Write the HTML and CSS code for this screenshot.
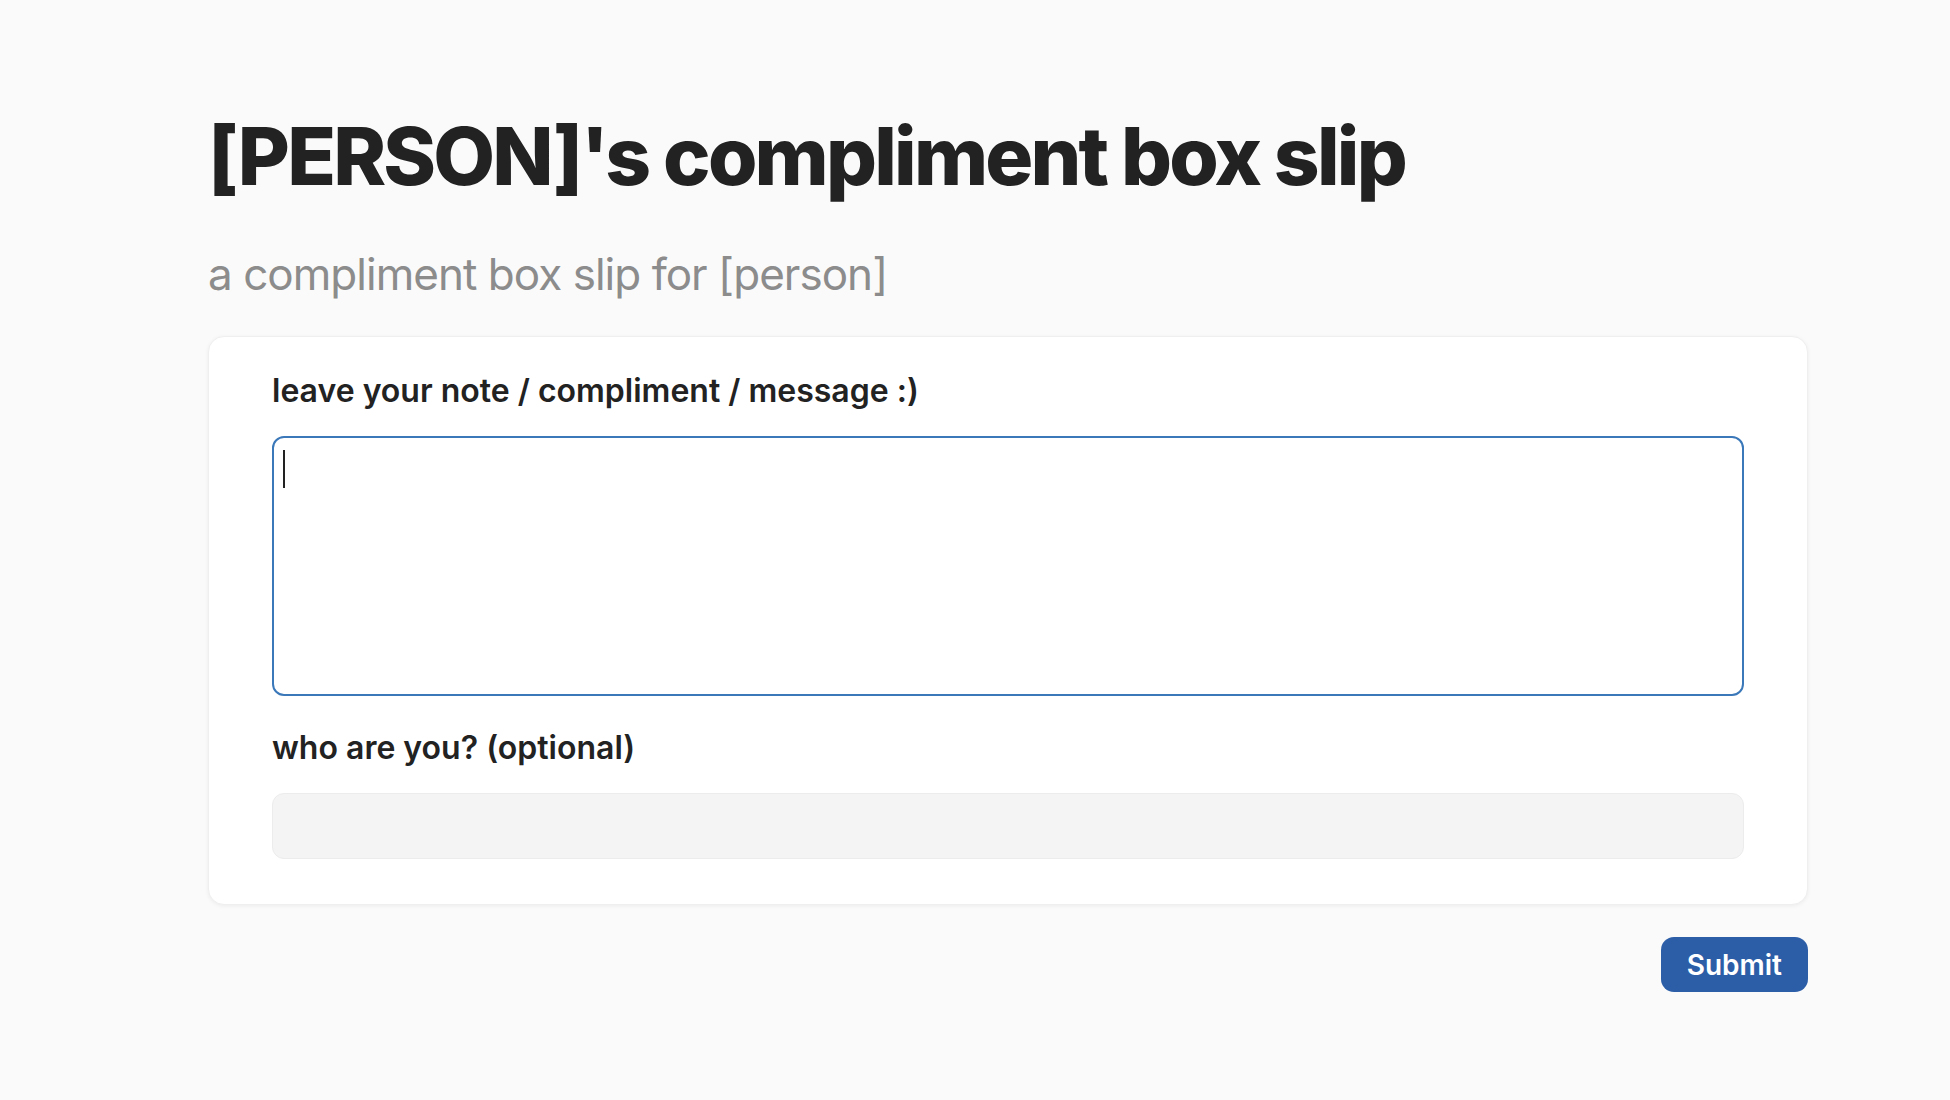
FILE: index.html
```html
<!DOCTYPE html>
<html lang="en">
<head>
<meta charset="utf-8">
<title>[PERSON]'s compliment box slip</title>
<link rel="stylesheet" href="styles.css">
</head>
<body>
<main class="page">
  <h1 class="title">[PERSON]'s compliment box slip</h1>
  <p class="subtitle">a compliment box slip for [person]</p>
  <form class="form">
    <div class="card">
      <label class="label" for="note">leave your note / compliment / message :)</label>
      <div class="area-wrap">
        <textarea id="note" class="note"></textarea>
        <span class="caret"></span>
      </div>
      <label class="label label-second" for="who">who are you? (optional)</label>
      <input id="who" class="who" type="text">
    </div>
    <div class="actions">
      <button type="button" class="submit">Submit</button>
    </div>
  </form>
</main>
</body>
</html>
```
FILE: styles.css
```css
html, body {
  margin: 0;
  padding: 0;
  background: #fafafa;
}
body {
  font-family: Inter, "Noto Sans", "Liberation Sans", sans-serif;
  color: #222222;
}
.page {
  width: 1600px;
  margin-left: 208px;
  padding-top: 108px;
}
.title {
  margin: 0;
  font-size: 80px;
  line-height: 96px;
  font-weight: 800;
  letter-spacing: -0.035em;
  color: #222222;
}
.subtitle {
  margin: 44px 0 0 0;
  font-size: 44px;
  line-height: 53px;
  font-weight: 400;
  letter-spacing: -0.022em;
  color: #8c8c8c;
}
.form {
  margin-top: 35px;
}
.card {
  background: #ffffff;
  border: 1px solid #efefef;
  border-radius: 16px;
  box-shadow: 0 1px 4px rgba(0, 0, 0, 0.06);
  padding: 35px 63px 45px 63px;
  display: flex;
  flex-direction: column;
}
.label {
  display: block;
  font-size: 32px;
  line-height: 38px;
  font-weight: 600;
  color: #222222;
}
.label-second {
  margin-top: 33px;
}
.area-wrap {
  position: relative;
  margin-top: 26px;
}
.note {
  display: block;
  box-sizing: border-box;
  width: 100%;
  height: 260px;
  margin: 0;
  border: 2px solid #3b78b9;
  border-radius: 12px;
  background: #ffffff;
  resize: none;
  outline: none;
  caret-color: transparent;
  font-family: inherit;
  font-size: 28px;
}
.caret {
  position: absolute;
  left: 11px;
  top: 14px;
  width: 2px;
  height: 38px;
  background: #222222;
}
.who {
  display: block;
  box-sizing: border-box;
  width: 100%;
  height: 66px;
  margin: 26px 0 0 0;
  border: 1px solid #ececec;
  border-radius: 12px;
  background: #f4f4f4;
  outline: none;
}
.actions {
  display: flex;
  justify-content: flex-end;
  margin-top: 32px;
}
.submit {
  height: 55px;
  padding: 0 26px;
  border: none;
  border-radius: 13px;
  background: #2c5ea8;
  color: #ffffff;
  font-family: inherit;
  font-size: 28px;
  font-weight: 600;
  cursor: pointer;
}
```
